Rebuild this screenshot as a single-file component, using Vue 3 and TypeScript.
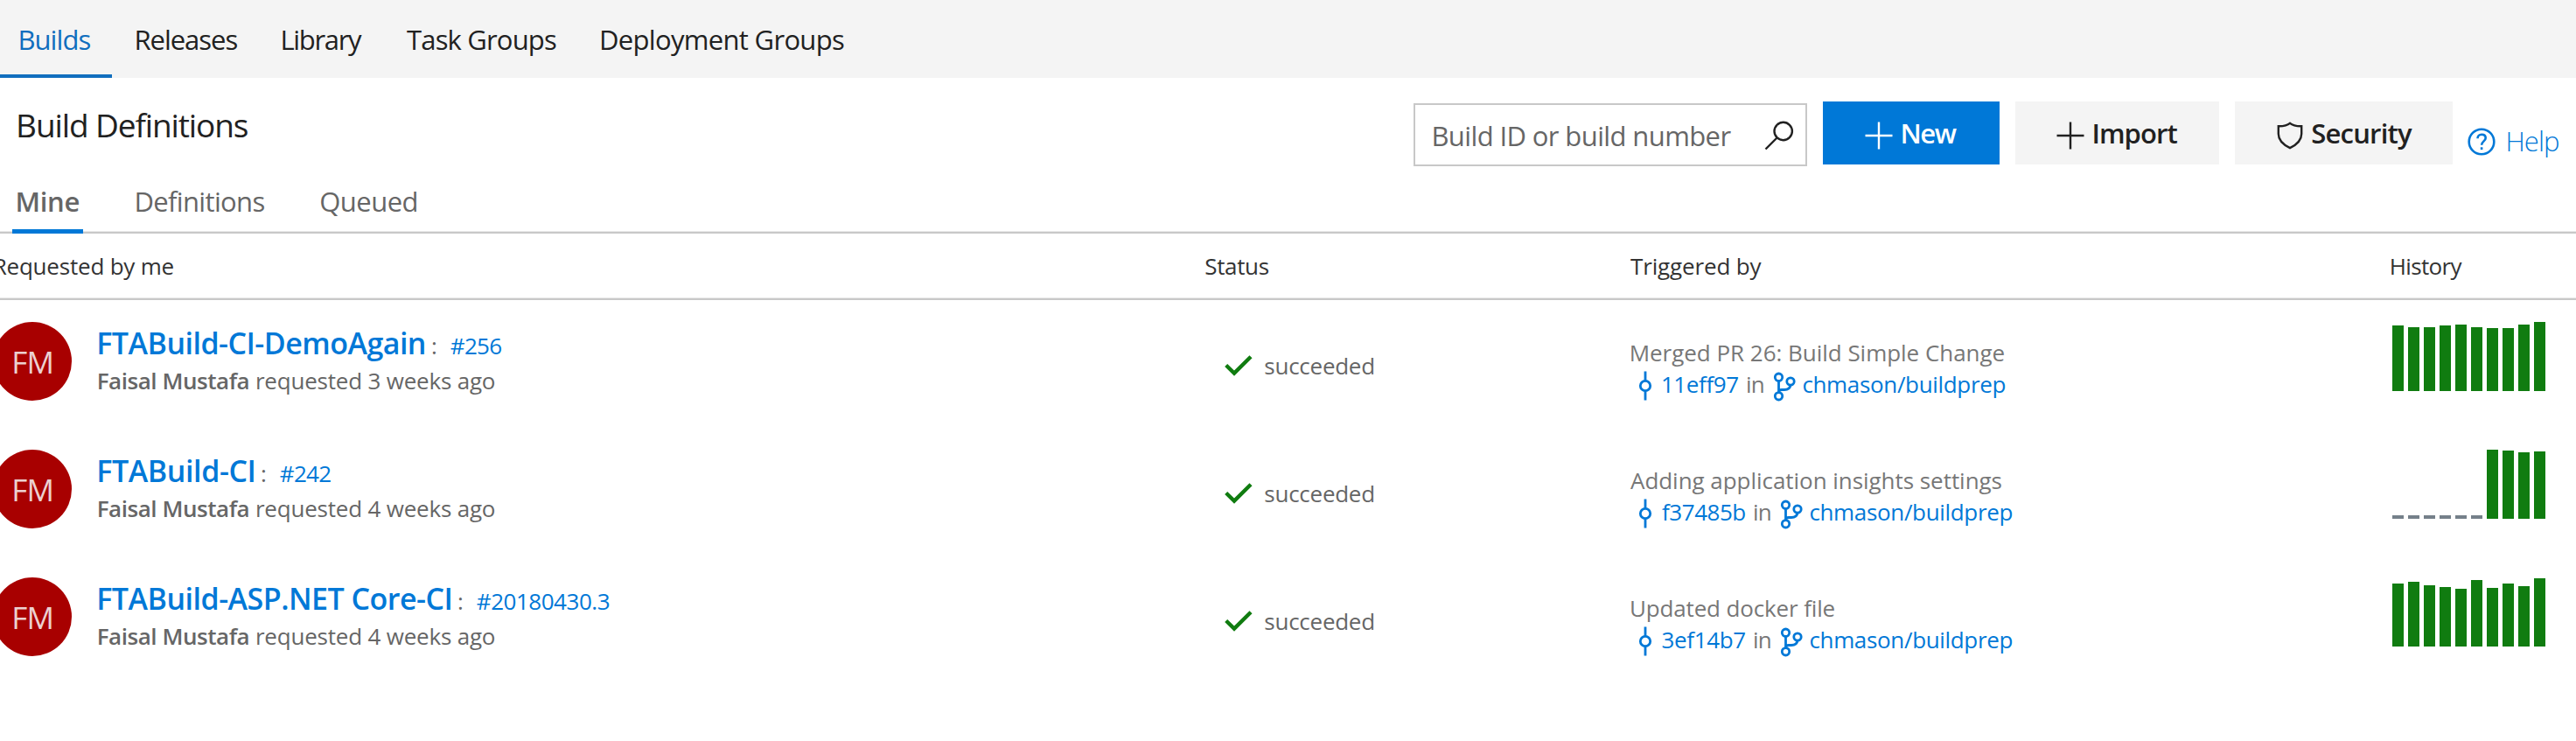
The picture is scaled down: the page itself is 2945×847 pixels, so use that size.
<script setup lang="ts">
import type { Directive } from 'vue'

interface Bar { height: number; idle?: boolean }
interface Label { text: string; width: number }
interface Build {
  name: Label
  number: Label
  age: Label
  message: Label
  commit: Label
  bars: Bar[]
}

const ctx = document.createElement('canvas').getContext('2d')!

// Tracks a label so that its glyphs span the given width.
// Measured at ten times the size, since glyph bounds come back rounded.
const vSpan: Directive<HTMLElement, number> = {
  mounted(el, { value }) {
    const style = getComputedStyle(el)
    ctx.font = `${style.fontWeight} ${parseFloat(style.fontSize) * 10}px ${style.fontFamily}`
    const text = (el.textContent ?? '').trim()
    const m = ctx.measureText(text)
    const left = (m.actualBoundingBoxLeft / 10) * 0.55
    const right = m.actualBoundingBoxRight / 10
    const step = (value - left - right) / (text.length - 1)
    el.style.letterSpacing = `${step.toFixed(3)}px`
    el.style.marginLeft = `${left.toFixed(2)}px`
    el.style.marginRight = `${(right - m.width / 10 - step).toFixed(2)}px`
  },
}

const hubs: Label[] = [
  { text: 'Builds', width: 81 },
  { text: 'Releases', width: 116 },
  { text: 'Library', width: 92 },
  { text: 'Task Groups', width: 170.5 },
  { text: 'Deployment Groups', width: 278 },
]

const tabs: Label[] = [
  { text: 'Mine', width: 71 },
  { text: 'Definitions', width: 147 },
  { text: 'Queued', width: 110 },
]

const solid = (...heights: number[]): Bar[] => heights.map((height) => ({ height }))
const idle = (count: number): Bar[] => Array.from({ length: count }, () => ({ height: 4, idle: true }))

const builds: Build[] = [
  {
    name: { text: 'FTABuild-CI-DemoAgain', width: 373 },
    number: { text: '#256', width: 58 },
    age: { text: 'requested 3 weeks ago', width: 272 },
    message: { text: 'Merged PR 26: Build Simple Change', width: 427 },
    commit: { text: '11eff97', width: 87 },
    bars: solid(75, 73, 73, 75, 76, 73, 72, 72, 76, 79),
  },
  {
    name: { text: 'FTABuild-CI', width: 178 },
    number: { text: '#242', width: 58 },
    age: { text: 'requested 4 weeks ago', width: 272 },
    message: { text: 'Adding application insights settings', width: 424 },
    commit: { text: 'f37485b', width: 95 },
    bars: [...idle(6), ...solid(79, 78, 76, 77)],
  },
  {
    name: { text: 'FTABuild-ASP.NET Core-CI', width: 403 },
    number: { text: '#20180430.3', width: 151 },
    age: { text: 'requested 4 weeks ago', width: 272 },
    message: { text: 'Updated docker file', width: 233 },
    commit: { text: '3ef14b7', width: 95 },
    bars: solid(72, 74, 70, 68, 66, 76, 67, 72, 69, 78),
  },
]
</script>

<template>
  <div class="page">
    <nav class="hubs">
      <a v-for="(hub, i) in hubs" :key="hub.text" class="hub" :class="{ active: i === 0 }">
        <span v-span="hub.width">{{ hub.text }}</span>
      </a>
    </nav>

    <header class="bar">
      <h1 class="title"><span v-span="263">Build Definitions</span></h1>
      <div class="actions">
        <div class="search">
          <span v-span="341">Build ID or build number</span>
          <svg class="search-icon" width="34" height="34" viewBox="0 0 34 34">
            <circle cx="21.7" cy="12" r="10.2" />
            <path d="M14.5 19.5L1.5 32.5" />
          </svg>
        </div>
        <button class="btn primary">
          <svg width="32" height="32" viewBox="0 0 32 32"><path d="M16 .5V31.500M.5 16H31.500" /></svg>
          <span v-span="63">New</span>
        </button>
        <button class="btn import">
          <svg width="32" height="32" viewBox="0 0 32 32"><path d="M16 .5V31.500M.5 16H31.500" /></svg>
          <span v-span="96">Import</span>
        </button>
        <button class="btn security">
          <svg width="30" height="32" viewBox="0 0 30 32">
            <path d="M15 1.800C11.500 4.800 7 5.300 1.800 5.200V14C1.800 21.500 7.500 26.500 15 30.200C22.500 26.500 28.200 21.500 28.200 14V5.200C23 5.300 18.500 4.800 15 1.800Z" />
          </svg>
          <span v-span="115">Security</span>
        </button>
        <a class="help">
          <svg width="32" height="32" viewBox="0 0 32 32">
            <circle cx="16" cy="16" r="14.300" />
            <path d="M11.500 12.200C11.500 9.400 13.500 7.700 16.100 7.700C18.800 7.700 20.700 9.300 20.700 11.700C20.700 15.300 16.100 15.500 16.100 19.700" />
            <path d="M16.100 22.300V25.100" />
          </svg>
          <span v-span="59">Help</span>
        </a>
      </div>
    </header>

    <div class="tabs">
      <a v-for="(tab, i) in tabs" :key="tab.text" class="tab" :class="{ active: i === 0 }">
        <span v-span="tab.width">{{ tab.text }}</span>
      </a>
    </div>

    <div class="grid head">
      <div class="head-me"><span v-span="205">Requested by me</span></div>
      <div><span v-span="72">Status</span></div>
      <div><span v-span="150">Triggered by</span></div>
      <div><span v-span="82">History</span></div>
    </div>

    <div v-for="build in builds" :key="build.name.text" class="grid row">
      <div class="who">
        <div class="avatar"><span v-span="44">FM</span></div>
        <div class="info">
          <div class="name-line">
            <a v-span="build.name.width" class="name">{{ build.name.text }}</a>
            <span class="colon">:</span>
            <a v-span="build.number.width" class="link">{{ build.number.text }}</a>
          </div>
          <div class="sub">
            <b v-span="172">Faisal Mustafa</b>
            <span v-span="build.age.width">{{ build.age.text }}</span>
          </div>
        </div>
      </div>
      <div class="status">
        <svg width="32" height="24" viewBox="0 0 32 24"><path d="M1.700 11.500L11 20.600L30 1.800" /></svg>
        <span v-span="124">succeeded</span>
      </div>
      <div class="trigger">
        <div class="message"><span v-span="build.message.width">{{ build.message.text }}</span></div>
        <div class="source">
          <svg class="commit" width="16" height="34" viewBox="0 0 16 34">
            <circle cx="8" cy="17" r="5.700" /><path d="M8 .5V11.300M8 22.700V33.500" />
          </svg>
          <a v-span="build.commit.width" class="link">{{ build.commit.text }}</a>
          <div class="in"><span v-span="19">in</span></div>
          <svg class="branch" width="26" height="34" viewBox="0 0 26 34">
            <circle cx="6.500" cy="6.200" r="4.200" />
            <circle cx="20" cy="11" r="4.200" />
            <circle cx="6.500" cy="27.800" r="4.200" />
            <path d="M6.500 10.400V23.600M20 15.200C19.500 19 17 20.500 13 20.500H10C8 20.500 6.500 21.500 6.500 23.600" />
          </svg>
          <a v-span="231" class="link">chmason/buildprep</a>
        </div>
      </div>
      <div class="history">
        <i v-for="(b, i) in build.bars" :key="i" :class="{ idle: b.idle }" :style="{ height: `${b.height}px` }"></i>
      </div>
    </div>
  </div>
</template>

<style>
html,
body {
  margin: 0;
  background: #fff;
  overflow: hidden;
}
</style>

<style scoped>
.page {
  width: 2945px;
  height: 847px;
  overflow: hidden;
  background: #fff;
  color: #212121;
  font-family: 'Open Sans', 'Noto Sans', sans-serif;
  font-size: 31px;
}
.page * {
  box-sizing: border-box;
}
.page span,
.page a,
.page b {
  white-space: nowrap;
}
svg {
  flex: none;
  fill: none;
  stroke: currentColor;
  stroke-width: 2.4;
}
.hubs {
  display: flex;
  gap: 51px;
  height: 89px;
  background: #f4f4f4;
  line-height: 90px;
}
.hub {
  display: flex;
  height: 89px;
}
.hub.active {
  padding: 0 25px 0 22px;
  margin-right: -24px;
  border-bottom: 4px solid #106ebe;
  color: #106ebe;
}
.bar {
  display: flex;
  justify-content: space-between;
  height: 116px;
}
.title {
  display: flex;
  margin: 0 0 0 20px;
  font-size: 37px;
  font-weight: 400;
  line-height: 108px;
}
.actions {
  display: flex;
  align-items: flex-start;
  padding-top: 27px;
  line-height: 74px;
}
.search {
  display: flex;
  justify-content: space-between;
  align-items: center;
  width: 450px;
  height: 72px;
  margin: 2px 18px 0 0;
  padding: 1px 13px 0 20px;
  border: 2px solid #c8c8c8;
  color: #666;
}
.search-icon {
  color: #212121;
  margin-top: 1px;
}
.btn {
  display: flex;
  align-items: center;
  height: 72px;
  margin: 0 18px 0 0;
  padding: 0 0 0 48px;
  border: 0;
  gap: 10px;
  background: #f4f4f4;
  color: #212121;
  font: 600 31px/76px 'Open Sans', 'Noto Sans', sans-serif;
}
.btn svg {
  margin-top: 5px;
}
.btn.primary {
  width: 202px;
  background: #0078d7;
  color: #fff;
}
.btn.import {
  width: 233px;
  padding-left: 47px;
}
.btn.security {
  width: 249px;
}
.help {
  display: flex;
  align-items: center;
  gap: 13px;
  width: 124px;
  height: 72px;
  margin: 9px 0 0 -1px;
  color: #0078d7;
  font-weight: 300;
  line-height: 72px;
}
.help svg {
  margin-top: 1px;
  stroke-width: 2.6;
}
.tabs {
  display: flex;
  gap: 64px;
  height: 62px;
  padding-left: 14px;
  border-bottom: 2px solid #c8c8c8;
  box-shadow: inset 0 -1px #eaeaea;
  line-height: 50px;
  color: #666;
}
.tab {
  display: flex;
  height: 62px;
}
.tab.active {
  padding: 0 5px;
  margin-right: -4px;
  border-bottom: 5px solid #0078d7;
  font-weight: 600;
}
.grid {
  display: grid;
  grid-template-columns: 1378px 486px 869px 212px;
}
.head {
  height: 76px;
  border-bottom: 2px solid #c8c8c8;
  box-shadow: inset 0 -1px #eaeaea;
  font-size: 26px;
  line-height: 74px;
  color: #333;
}
.head > div {
  display: flex;
}
.head-me {
  margin-left: -7px;
}
.row {
  height: 146px;
  font-size: 26px;
  line-height: 36px;
  color: #666;
}
.who {
  display: flex;
  gap: 30px;
  margin-left: -8px;
  padding-top: 25px;
}
.avatar {
  display: flex;
  justify-content: center;
  width: 90px;
  height: 90px;
  border-radius: 50%;
  background: #a80000;
  color: #ecd0d0;
  font-size: 35px;
  line-height: 92px;
}
.name-line {
  display: flex;
  align-items: baseline;
  height: 46px;
  line-height: 48px;
}
.name {
  color: #0078d7;
  font-size: 34px;
  font-weight: 600;
}
.colon {
  width: 22px;
  margin-left: 8px;
}
.link {
  color: #0078d7;
}
.sub {
  display: flex;
  gap: 9px;
  margin-top: 3px;
}
.sub b {
  font-weight: 600;
}
.status {
  display: flex;
  gap: 14px;
  padding: 57px 0 0 22px;
}
.status svg {
  margin-top: 6px;
  stroke: #107c10;
  stroke-width: 4.400;
}
.trigger {
  padding-top: 42px;
}
.message {
  display: flex;
  color: #777;
}
.source {
  display: flex;
  color: #777;
}
.source svg {
  stroke: #0078d7;
  stroke-width: 2.800;
}
.commit {
  margin: 3px 11px 0 9px;
}
.in {
  display: flex;
  padding-left: 10px;
}
.branch {
  margin: 4px 8px 0 11px;
}
.history {
  display: flex;
  align-items: flex-end;
  gap: 5px;
  height: 104px;
  padding-left: 2px;
}
.history i {
  width: 13px;
  background: #107c10;
}
.history .idle {
  background: #75808a;
}
</style>
